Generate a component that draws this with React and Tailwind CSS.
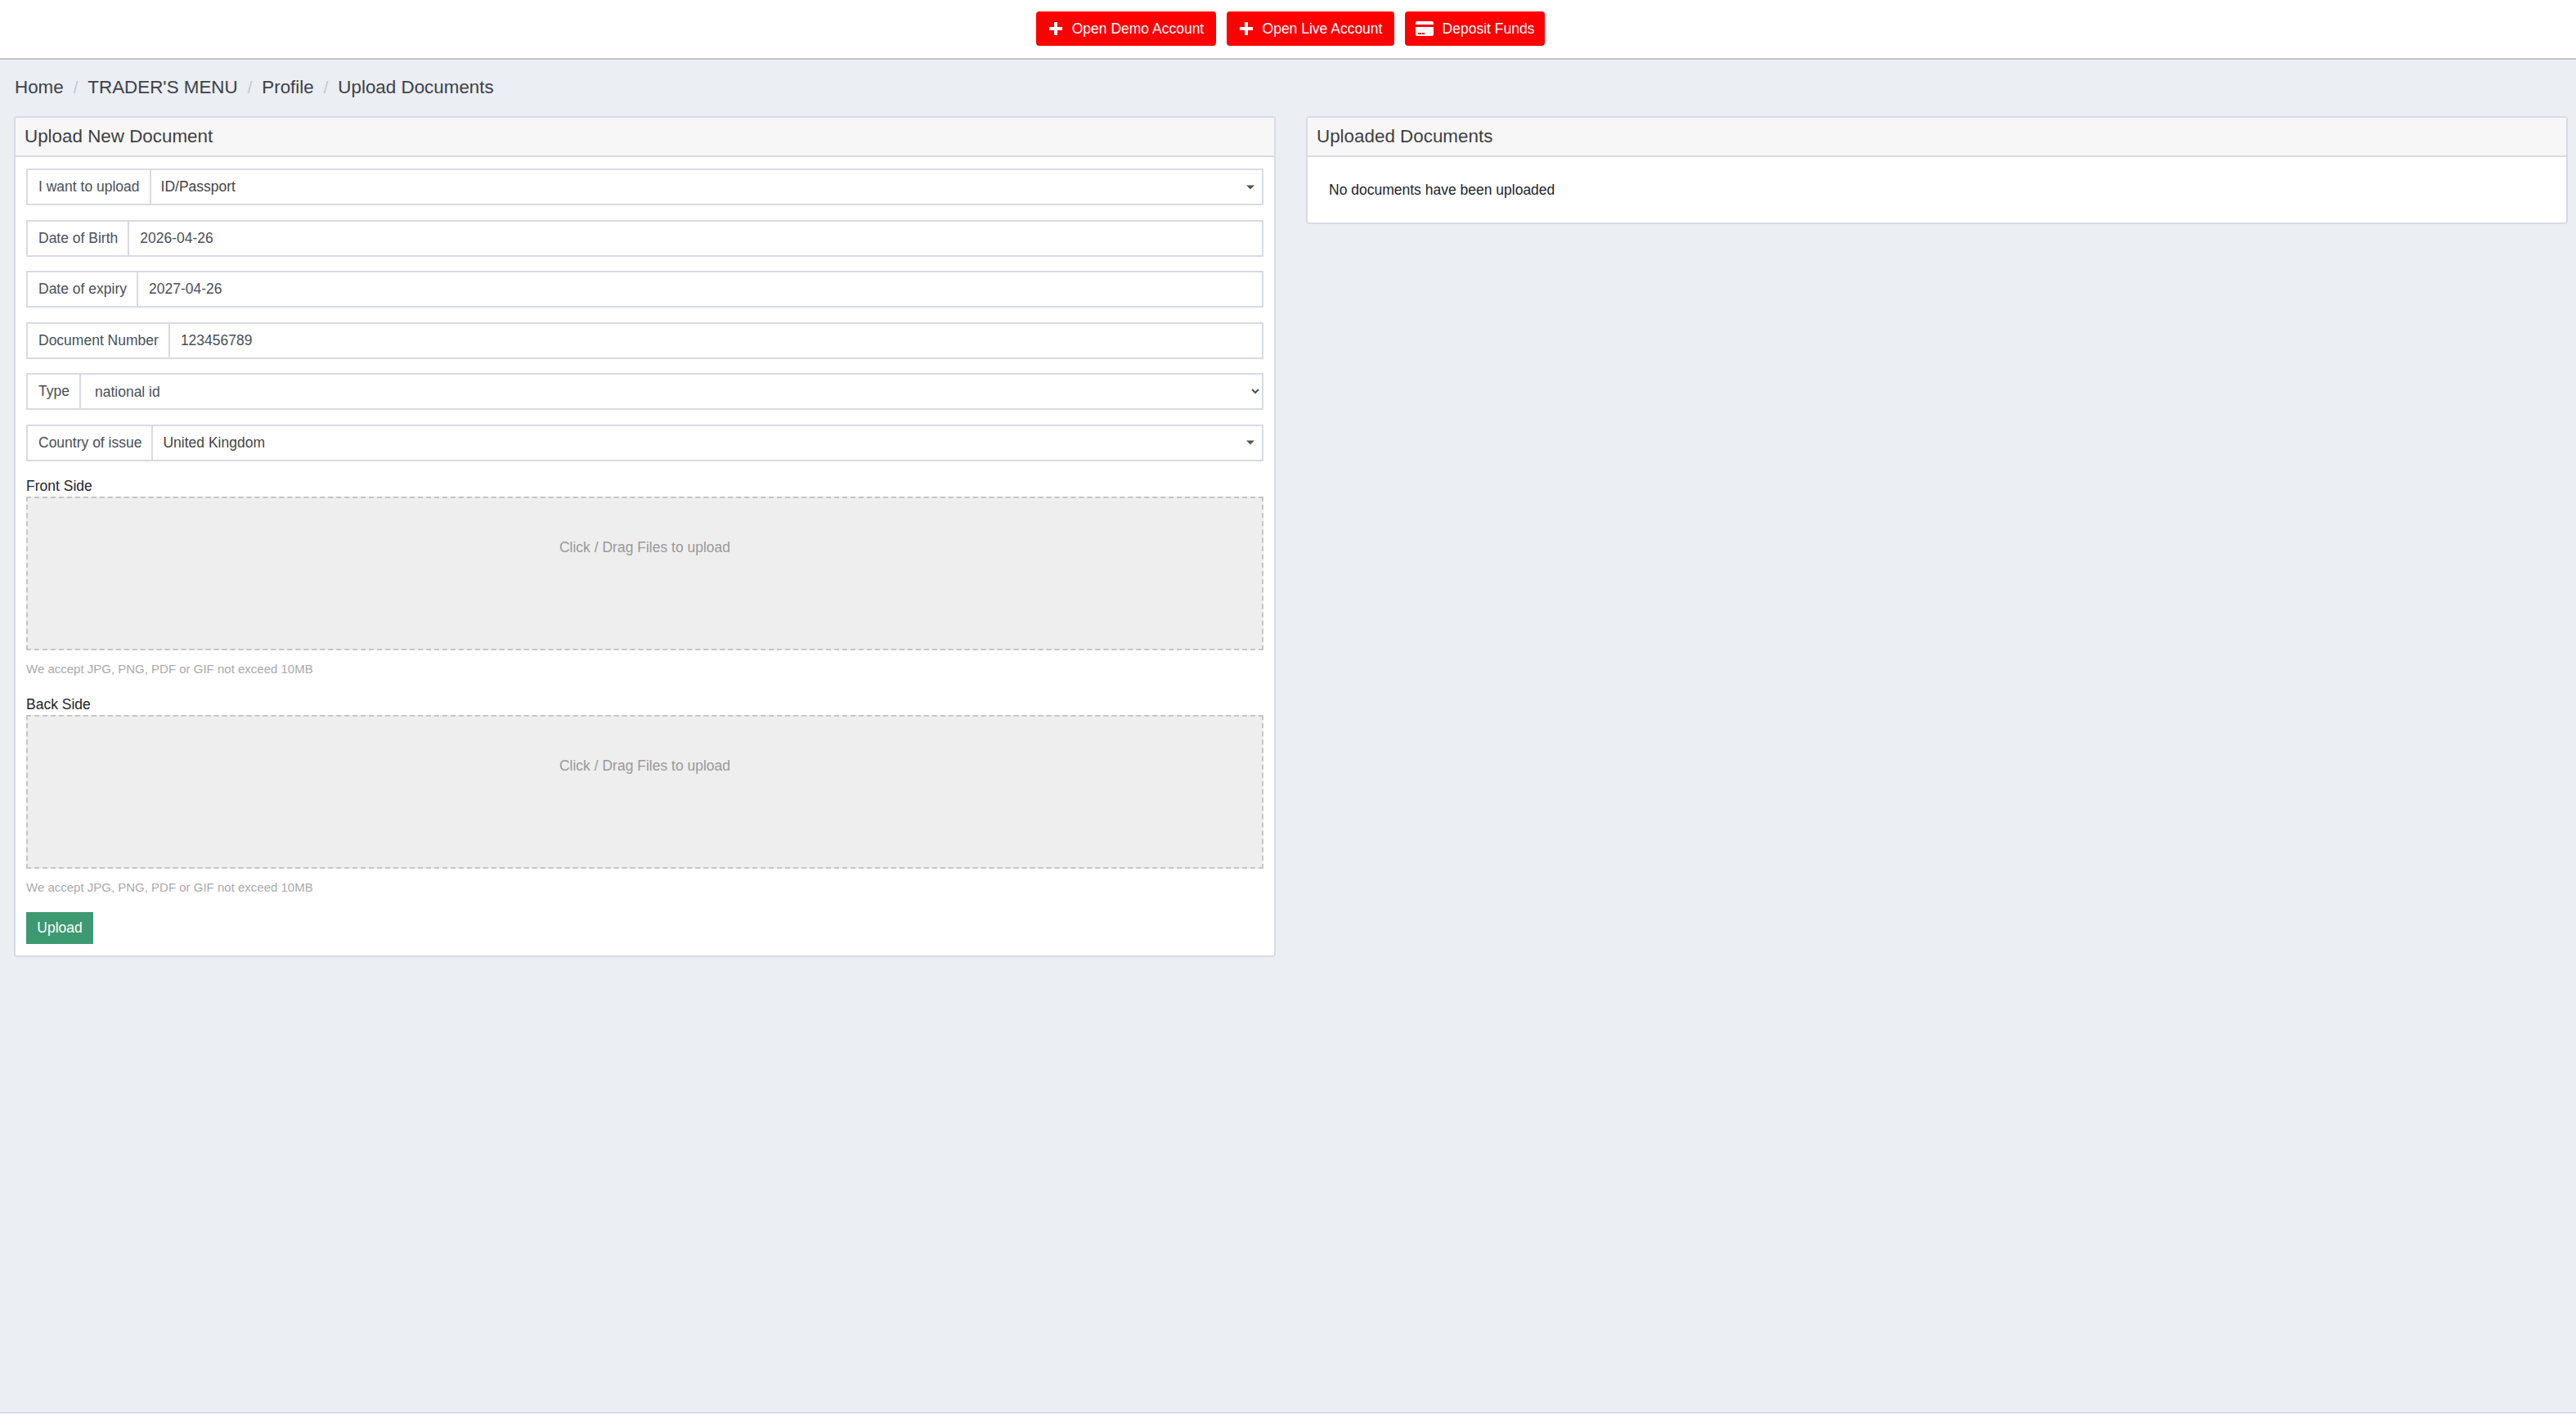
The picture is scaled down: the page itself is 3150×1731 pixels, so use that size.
import React from "react";

const fieldBox = "h-[45px] border-2 border-[#d8dbe5] bg-white flex items-stretch";
const addon = "flex items-center pl-[13px] pr-[12px] text-[17.5px] text-[#495057] border-r-2 border-[#d8dbe5] whitespace-nowrap";

function PlusIcon() {
  return (
    <svg width="18" height="18" viewBox="0 0 18 18" className="shrink-0">
      <path d="M7 1h4v6h6v4h-6v6H7v-6H1V7h6z" fill="currentColor" />
    </svg>
  );
}

function CardIcon() {
  return (
    <svg width="22" height="18" viewBox="0 0 22 18" className="shrink-0">
      <path d="M2 0h18a2 2 0 0 1 2 2v2H0V2a2 2 0 0 1 2-2zM0 7h22v9a2 2 0 0 1-2 2H2a2 2 0 0 1-2-2zm3 7v2h4v-2zm5 0v2h3v-2z" fill="currentColor" fillRule="evenodd" />
    </svg>
  );
}

function HeaderButton({ icon, label, width }) {
  return (
    <button className={`h-[42px] ${width} bg-[#ff0000] text-white rounded-[4px] text-[17.5px] flex items-center justify-center gap-[11px]`}>
      {icon}
      {label}
    </button>
  );
}

function TextField({ label, value }) {
  return (
    <div className={fieldBox}>
      <span className={addon}>{label}</span>
      <input
        readOnly
        defaultValue={value}
        className="flex-1 min-w-0 px-[13px] text-[17.5px] text-[#495057] bg-white outline-none"
      />
    </div>
  );
}

function FancySelect({ label, value }) {
  return (
    <div className={fieldBox}>
      <span className={addon}>{label}</span>
      <div className="relative flex-1 flex items-center px-[12px] text-[17.5px] text-[#444]">
        {value}
        <span className="absolute right-[9px] top-1/2 -translate-y-1/2 w-0 h-0 border-x-[5px] border-x-transparent border-t-[5px] border-t-[#555]" />
      </div>
    </div>
  );
}

function Dropzone({ label }) {
  return (
    <div>
      <div className="text-[17.5px] leading-[20px] text-[#212529] mb-[3px]">{label}</div>
      <div className="h-[188px] border-2 border-dashed border-[#c6c6c6] bg-[#eeeeee] pt-[50px] text-center text-[17.5px] leading-[20px] text-[#999]">
        Click / Drag Files to upload
      </div>
      <p className="mt-[14px] text-[15px] leading-[18px] text-[#aaa]">We accept JPG, PNG, PDF or GIF not exceed 10MB</p>
    </div>
  );
}

function Card({ title, children }) {
  return (
    <div className="bg-white border-2 border-[#d8dbe5] rounded-[4px]">
      <div className="h-[48px] bg-[#f7f7f7] border-b-2 border-[#d8dbe5] flex items-center px-[11px] text-[22.4px] text-[#3f3f3f]">
        {title}
      </div>
      {children}
    </div>
  );
}

export default function App() {
  const crumbs = ["Home", "TRADER'S MENU", "Profile", "Upload Documents"];

  return (
    <div className="min-h-[1731px] bg-[#ebeef3] flex flex-col" style={{ fontFamily: '"Liberation Sans", Arial, sans-serif' }}>
      <header className="h-[73px] bg-white border-b-2 border-[#c4c4c6] flex justify-center items-center gap-[13px] pl-[6px] pb-[1px]">
        <HeaderButton icon={<PlusIcon />} label="Open Demo Account" width="w-[220px]" />
        <HeaderButton icon={<PlusIcon />} label="Open Live Account" width="w-[205px]" />
        <HeaderButton icon={<CardIcon />} label="Deposit Funds" width="w-[171px]" />
      </header>

      <main className="flex-1 pl-[17px] pr-[10px]">
        <nav className="h-[69px] flex items-center gap-[12px] pl-[1px] pb-[1px] text-[22.4px] text-[#3c4249]">
          {crumbs.map((c, i) => (
            <React.Fragment key={c}>
              {i > 0 && <span className="text-[#c3c7cc] text-[20px]">/</span>}
              <span>{c}</span>
            </React.Fragment>
          ))}
        </nav>

        <div className="grid grid-cols-2 gap-[37px] items-start">
          <Card title="Upload New Document">
            <div className="px-[13px] pt-[14px] pb-[14px] flex flex-col">
              <div className="flex flex-col gap-[17.5px]">
                <FancySelect label="I want to upload" value="ID/Passport" />
                <TextField label="Date of Birth" value="2026-04-26" />
                <TextField label="Date of expiry" value="2027-04-26" />
                <TextField label="Document Number" value="123456789" />
                <div className={fieldBox}>
                  <span className={addon}>Type</span>
                  <select className="flex-1 px-[13px] text-[17.5px] text-[#495057] bg-white outline-none">
                    <option>national id</option>
                  </select>
                </div>
                <FancySelect label="Country of issue" value="United Kingdom" />
              </div>
              <div className="mt-[20px] flex flex-col gap-[24px]">
                <Dropzone label="Front Side" />
                <Dropzone label="Back Side" />
              </div>
              <button className="mt-[21px] self-start w-[82px] h-[39px] bg-[#3d9970] text-white text-[17.5px]">Upload</button>
            </div>
          </Card>

          <Card title="Uploaded Documents">
            <div className="h-[80px] flex items-center px-[26px] text-[17.5px] text-[#212529]">No documents have been uploaded</div>
          </Card>
        </div>
      </main>

      <footer className="h-[5px] bg-white border-t-2 border-[#d8dbe5]" />
    </div>
  );
}
